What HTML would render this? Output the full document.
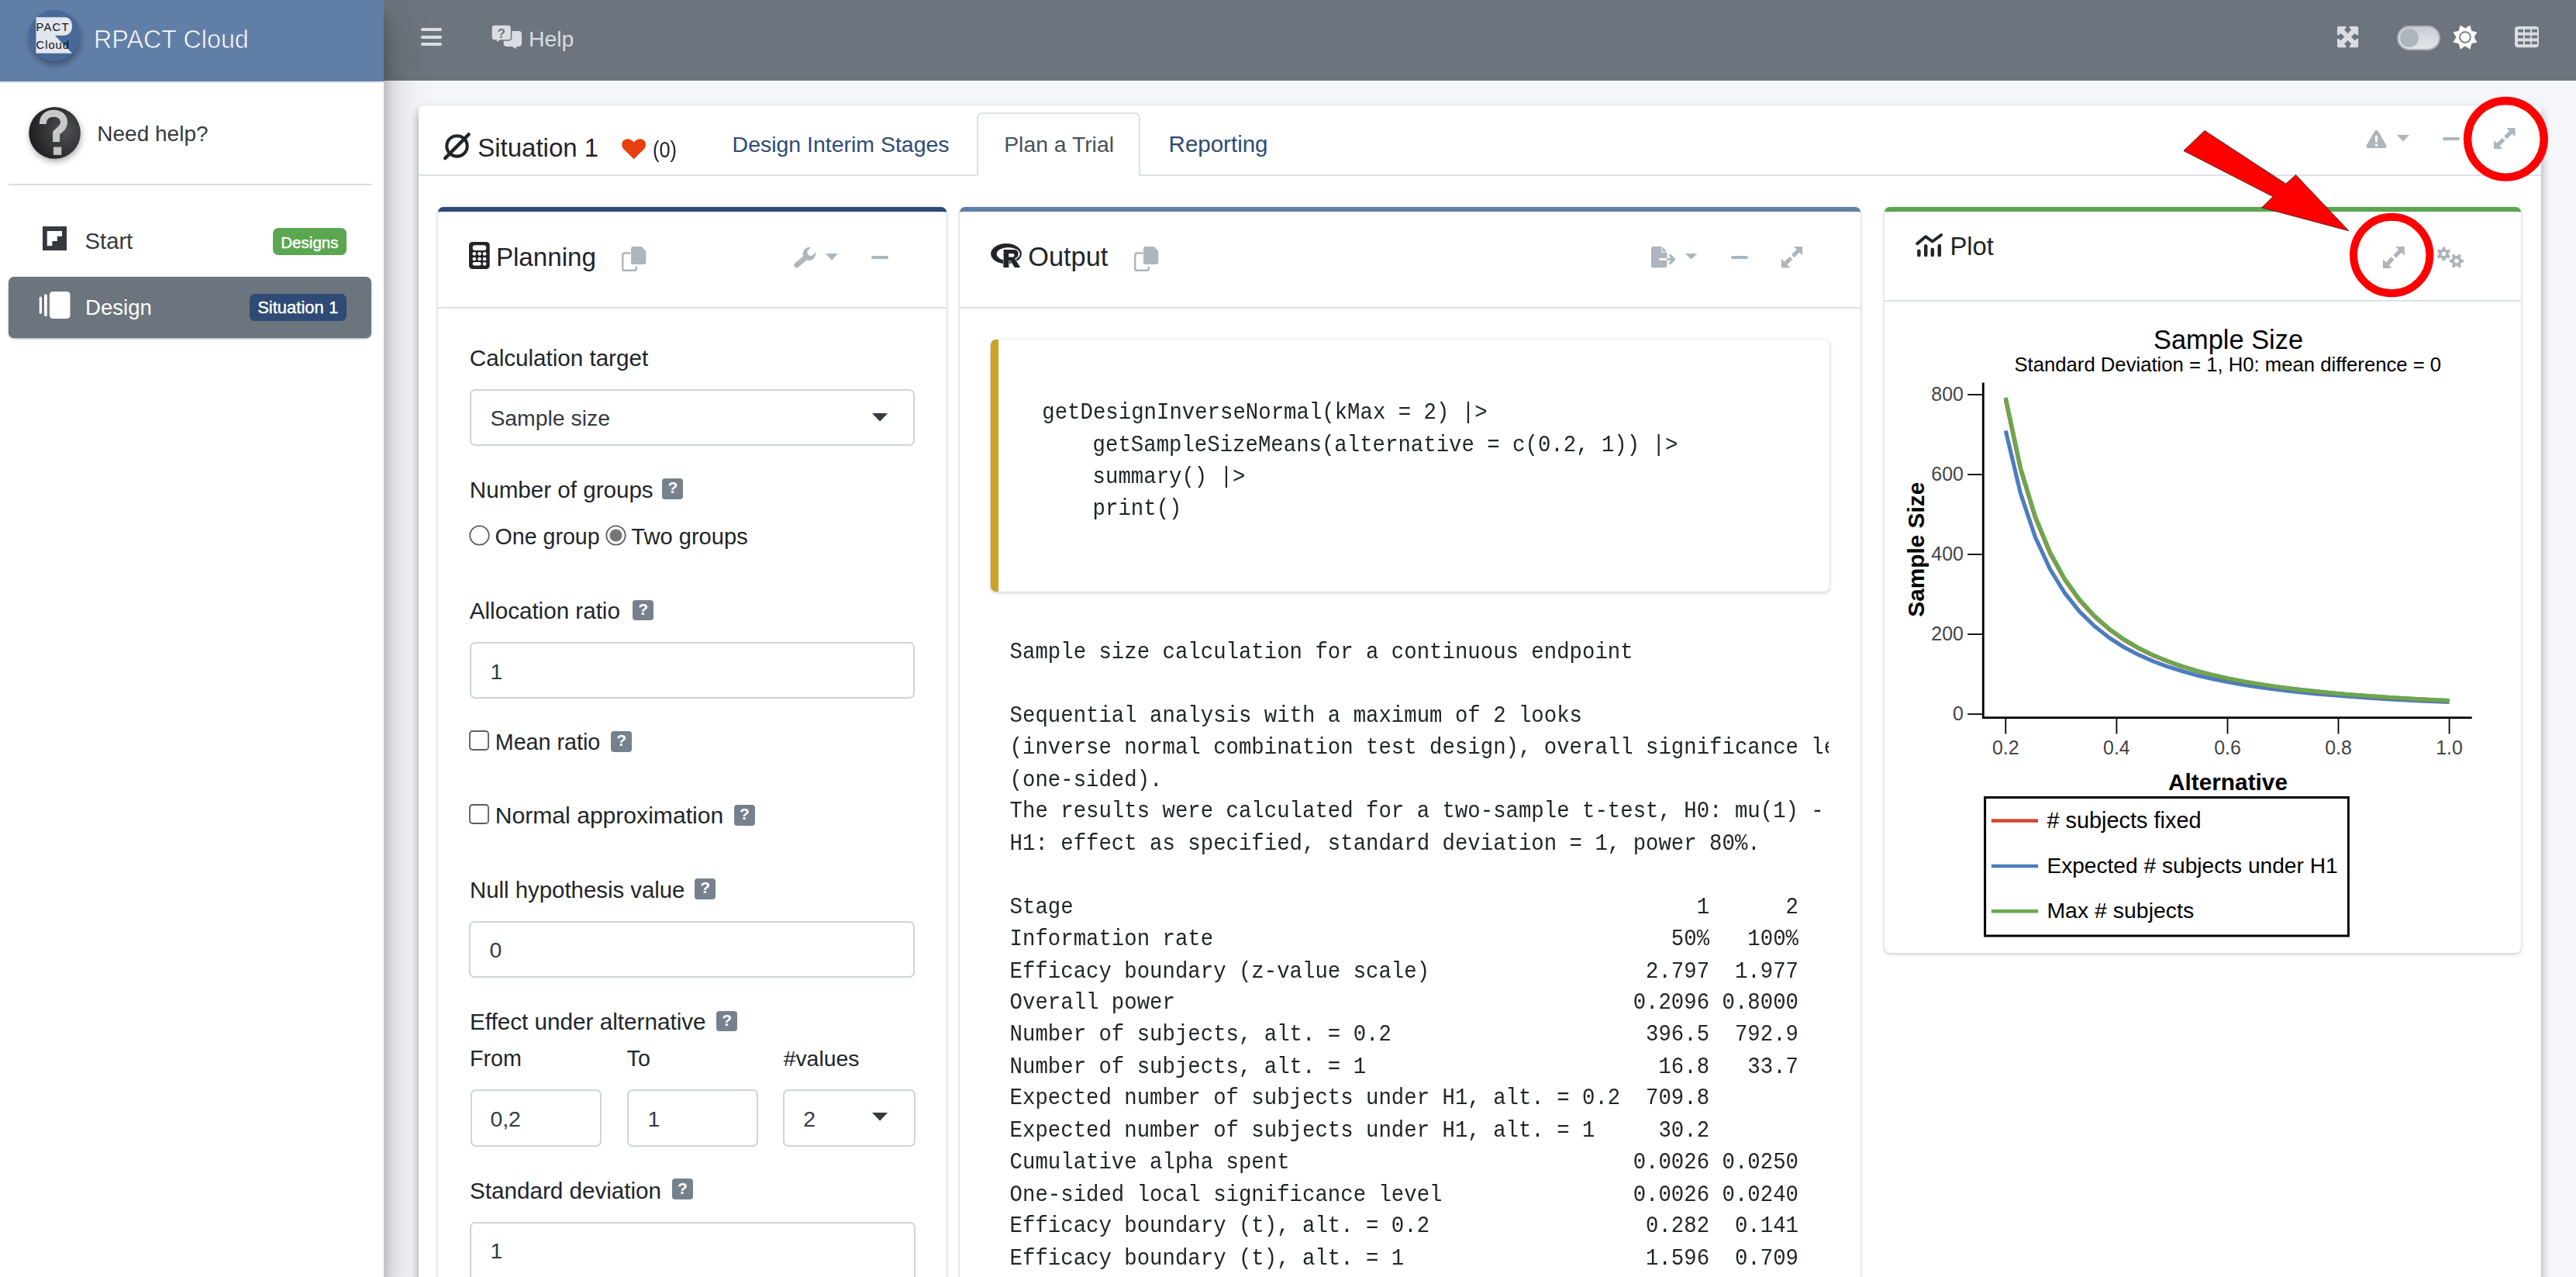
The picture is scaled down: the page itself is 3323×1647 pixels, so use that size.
<!DOCTYPE html>
<html><head><meta charset="utf-8"><title>RPACT Cloud</title>
<style>
html,body{margin:0;padding:0}
body{width:3323px;height:1647px;overflow:hidden;position:relative;background:#f4f6f9;font-family:"Liberation Sans",sans-serif;}
.t{position:absolute;white-space:pre;}
.b{position:absolute;box-sizing:border-box;}
svg.b{overflow:visible}
</style></head><body>

<div class="b" style="left:0.0px;top:0.0px;width:495.0px;height:1647.0px;background:#fff;box-shadow:0 28px 56px rgba(0,0,0,.25),0 20px 20px rgba(0,0,0,.22);z-index:2"></div>
<div class="b" style="left:0.0px;top:0.0px;width:495.0px;height:107.0px;background:#617ea7;border-bottom:2px solid #dfe3e8;z-index:3"></div>
<div style="position:absolute;left:0;top:0;width:495px;height:1647px;z-index:4">
<svg class="b" style="left:30.0px;top:6.0px;" width="80.00" height="80.00" viewBox="0 0 80.00 80.00" preserveAspectRatio="none">
<defs><filter id="lsh" x="-50%" y="-50%" width="200%" height="200%"><feGaussianBlur stdDeviation="4"/></filter></defs>
<circle cx="41" cy="45" r="33" fill="rgba(0,0,0,.35)" filter="url(#lsh)"/>
<circle cx="40" cy="40" r="33" fill="#476899"/>
<path d="M16.5 16.3 H53.5 C60 16.3 63 22 63 28 C63 35 59 39.7 52 39.7 H40.8 L63 62.8 H16.5 Z" fill="#e3e6ee"/>
<text x="16.5" y="33.9" font-family="Liberation Sans" font-size="14.8" fill="#111" textLength="42" lengthAdjust="spacing">PACT</text>
<text x="16.5" y="57.1" font-family="Liberation Sans" font-size="14.8" fill="#111" textLength="42.5" lengthAdjust="spacing">Cloud</text>
</svg>
<div class="t " style="left:121.0px;top:35.3px;font-size:32.3px;line-height:32.3px;color:#ffffff;font-weight:400;font-family:'Liberation Sans', sans-serif;z-index:5;-webkit-text-stroke:0.7px #617ea7">RPACT Cloud</div>
<svg class="b" style="left:30.0px;top:130.0px;" width="82.00" height="84.00" viewBox="0 0 82.00 84.00" preserveAspectRatio="none">
<defs><radialGradient id="hg" cx="70%" cy="45%" r="70%"><stop offset="0" stop-color="#505154"/><stop offset="1" stop-color="#1f1f21"/></radialGradient>
<filter id="hsh" x="-50%" y="-50%" width="200%" height="200%"><feGaussianBlur stdDeviation="4"/></filter></defs>
<circle cx="41.5" cy="45" r="33" fill="rgba(0,0,0,.35)" filter="url(#hsh)"/>
<circle cx="40.6" cy="41.4" r="33.3" fill="url(#hg)"/>
<path d="M25.3 30 C25.3 20 32 16.3 39.5 16.3 C47.5 16.3 52.6 21.5 52.6 27.8 C52.6 34.5 46.5 37.5 42.6 41.5 L42.6 53" fill="none" stroke="#c9c9c9" stroke-width="9" stroke-linejoin="round"/>
<rect x="38.9" y="59.6" width="10.4" height="10.2" fill="#c4c4c4"/>
</svg>
<div class="t " style="left:125.3px;top:158.8px;font-size:28px;line-height:28px;color:#343a40;font-weight:400;font-family:'Liberation Sans', sans-serif;">Need help?</div>
<div class="b" style="left:11.0px;top:237.0px;width:468.0px;height:2.0px;background:#d7dce2"></div>
<svg class="b" style="left:55.0px;top:292.0px;" width="31.00" height="31.00" viewBox="0 0 31.00 31.00" preserveAspectRatio="none"><rect x="0" y="0" width="31" height="31" fill="#343a40"/><path d="M5.8 6.1 H25 V12.7 H18.8 V19 H12.4 V25 H5.8 Z" fill="#fff"/></svg>
<div class="t " style="left:109.6px;top:296.7px;font-size:29.2px;line-height:29.2px;color:#343a40;font-weight:400;font-family:'Liberation Sans', sans-serif;">Start</div>
<div class="b" style="left:352.0px;top:294.0px;width:95.0px;height:34.6px;background:#5ba650;border-radius:7px"></div>
<div class="t " style="left:362.2px;top:302.5px;font-size:20.6px;line-height:20.6px;color:#fff;font-weight:400;font-family:'Liberation Sans', sans-serif;-webkit-text-stroke:0.4px #fff">Designs</div>
<div class="b" style="left:11.0px;top:357.0px;width:468.0px;height:78.5px;background:#6c757d;border-radius:7px;box-shadow:0 1px 3px rgba(0,0,0,.12),0 1px 2px rgba(0,0,0,.24)"></div>
<svg class="b" style="left:50.0px;top:375.0px;" width="41.00" height="37.00" viewBox="0 0 41.00 37.00" preserveAspectRatio="none"><rect x="0.7" y="7.6" width="3.3" height="22.2" rx="1.6" fill="#fff"/><rect x="7" y="4.3" width="3.8" height="28.8" rx="1.9" fill="#fff"/><rect x="13.9" y="1" width="26.6" height="35.1" rx="4.5" fill="#fff"/></svg>
<div class="t " style="left:110.0px;top:383.1px;font-size:27.6px;line-height:27.6px;color:#fff;font-weight:400;font-family:'Liberation Sans', sans-serif;">Design</div>
<div class="b" style="left:322.0px;top:378.7px;width:125.0px;height:35.1px;background:#2e4a75;border-radius:7px"></div>
<div class="t " style="left:332.2px;top:386.4px;font-size:22.0px;line-height:22.0px;color:#fff;font-weight:400;font-family:'Liberation Sans', sans-serif;-webkit-text-stroke:0.4px #fff">Situation 1</div>
</div>
<div class="b" style="left:495.0px;top:0.0px;width:2828.0px;height:104.0px;background:#6c757d;z-index:1"></div>
<div style="position:absolute;left:0;top:0;width:3323px;height:104px;z-index:5">
<div class="b" style="left:543.0px;top:35.8px;width:27.2px;height:4.1px;background:#dadde1;border-radius:2px"></div>
<div class="b" style="left:543.0px;top:45.7px;width:27.2px;height:4.1px;background:#dadde1;border-radius:2px"></div>
<div class="b" style="left:543.0px;top:55.3px;width:27.2px;height:4.1px;background:#dadde1;border-radius:2px"></div>
<svg class="b" style="left:630.0px;top:30.0px;" width="46.00" height="36.00" viewBox="0 0 46.00 36.00" preserveAspectRatio="none">
<path d="M23.7 9.9 H39 Q43 9.9 43 13.9 V26 Q43 30 39 30 H36 V33.1 L30.2 30 H23.7 Q19.7 30 19.7 26 V13.9 Q19.7 9.9 23.7 9.9 Z" fill="#dadde1"/>
<path d="M8 2 H25.6 Q29.6 2 29.6 6 V18.1 Q29.6 22.1 25.6 22.1 H15.7 L10.1 25.3 V22.1 H8 Q4 22.1 4 18.1 V6 Q4 2 8 2 Z" fill="#dadde1" stroke="#6c757d" stroke-width="1.5"/>
<text x="16.6" y="18.6" font-family="Liberation Sans" font-weight="bold" font-size="17" fill="#6c757d" text-anchor="middle">?</text>
</svg>
<div class="t " style="left:682.0px;top:35.5px;font-size:28.4px;line-height:28.4px;color:#dadde1;font-weight:400;font-family:'Liberation Sans', sans-serif;">Help</div>
<svg class="b" style="left:3015.0px;top:34.0px;" width="27.20" height="27.20" viewBox="0 0 27.20 27.20" preserveAspectRatio="none"><rect x="0" y="0" width="27.2" height="27.2" rx="1.8" fill="#dadde1"/><polygon points="11.30,-1.00 11.30,2.00 9.00,4.50 13.60,9.30 18.20,4.50 15.90,2.00 15.90,-1.00" fill="#6c757d"/><polygon points="28.20,11.30 25.20,11.30 22.70,9.00 17.90,13.60 22.70,18.20 25.20,15.90 28.20,15.90" fill="#6c757d"/><polygon points="15.90,28.20 15.90,25.20 18.20,22.70 13.60,17.90 9.00,22.70 11.30,25.20 11.30,28.20" fill="#6c757d"/><polygon points="-1.00,15.90 2.00,15.90 4.50,18.20 9.30,13.60 4.50,9.00 2.00,11.30 -1.00,11.30" fill="#6c757d"/></svg>
<svg class="b" style="left:3092.0px;top:32.8px;" width="56.00" height="31.90" viewBox="0 0 56.00 31.90" preserveAspectRatio="none">
<defs><linearGradient id="tg" x1="0" y1="0" x2="0" y2="1"><stop offset="0" stop-color="#c9cdd3"/><stop offset="1" stop-color="#e4e6ea"/></linearGradient></defs>
<rect x="1" y="1" width="54" height="29.9" rx="15" fill="url(#tg)" stroke="#a9b0b9" stroke-width="2"/>
<circle cx="16" cy="16" r="12" fill="#adb5bd"/></svg>
<svg class="b" style="left:3163.5px;top:31.6px;" width="32.00" height="32.00" viewBox="0 0 32.00 32.00" preserveAspectRatio="none"><polygon points="22.39,0.57 24.20,7.80 31.43,9.61 27.60,16.00 31.43,22.39 24.20,24.20 22.39,31.43 16.00,27.60 9.61,31.43 7.80,24.20 0.57,22.39 4.40,16.00 0.57,9.61 7.80,7.80 9.61,0.57 16.00,4.40" fill="#fff"/><circle cx="16" cy="16" r="6.9" fill="#fff" stroke="#6c757d" stroke-width="1.7"/></svg>
<svg class="b" style="left:3244.0px;top:34.2px;" width="31.00" height="27.20" viewBox="0 0 31.00 27.20" preserveAspectRatio="none"><rect x="0" y="0" width="31" height="27.2" rx="4" fill="#dadde1"/><rect x="4" y="3.8" width="7" height="3.9" fill="#6c757d"/><rect x="4" y="11.5" width="7" height="3.9" fill="#6c757d"/><rect x="4" y="19.3" width="7" height="3.9" fill="#6c757d"/><rect x="13" y="3.8" width="7" height="3.9" fill="#6c757d"/><rect x="13" y="11.5" width="7" height="3.9" fill="#6c757d"/><rect x="13" y="19.3" width="7" height="3.9" fill="#6c757d"/><rect x="22" y="3.8" width="7" height="3.9" fill="#6c757d"/><rect x="22" y="11.5" width="7" height="3.9" fill="#6c757d"/><rect x="22" y="19.3" width="7" height="3.9" fill="#6c757d"/></svg>
</div>
<div style="position:absolute;left:0;top:0;width:3323px;height:1647px;z-index:6">
<div class="b" style="left:540.0px;top:136.0px;width:2738.0px;height:1564.0px;background:#fff;border-radius:7px;box-shadow:0 6px 12px rgba(0,0,0,.16),0 6px 12px rgba(0,0,0,.23)"></div>
<div class="b" style="left:540.0px;top:225.0px;width:2738.0px;height:2.0px;background:#dee2e6"></div>
<svg class="b" style="left:572.0px;top:170.8px;" width="35.00" height="35.00" viewBox="0 0 35.00 35.00" preserveAspectRatio="none"><circle cx="17.5" cy="17.4" r="13.2" fill="none" stroke="#212529" stroke-width="4.1"/><line x1="2.3" y1="33" x2="32.5" y2="2.5" stroke="#212529" stroke-width="4.6" stroke-linecap="round"/></svg>
<div class="t " style="left:616.2px;top:174.1px;font-size:33px;line-height:33px;color:#212529;font-weight:400;font-family:'Liberation Sans', sans-serif;">Situation 1</div>
<svg class="b" style="left:802.0px;top:179.4px;" width="31.30" height="26.30" viewBox="0 0 31.30 26.30" preserveAspectRatio="none"><path d="M15.65 26.3 L3 13.8 C-1 9.8 -0.5 3.5 3.8 1.2 C7.8 -1 12 0.5 15.65 4.3 C19.3 0.5 23.5 -1 27.5 1.2 C31.8 3.5 32.3 9.8 28.3 13.8 Z" fill="#e5400d"/></svg>
<div class="t " style="left:842.0px;top:182.3px;font-size:25.4px;line-height:25.4px;color:#212529;font-weight:400;font-family:'Liberation Sans', sans-serif;transform:scaleY(1.14);transform-origin:0 21.5px">(0)</div>
<div class="t " style="left:944.6px;top:172.3px;font-size:28.46px;line-height:28.46px;color:#2e4a75;font-weight:400;font-family:'Liberation Sans', sans-serif;">Design Interim Stages</div>
<div class="b" style="left:1260.0px;top:144.5px;width:211.0px;height:82.5px;background:#fff;border:2px solid #dee2e6;border-bottom:none;border-radius:7px 7px 0 0"></div>
<div class="t " style="left:1295.2px;top:171.7px;font-size:28.35px;line-height:28.35px;color:#495057;font-weight:400;font-family:'Liberation Sans', sans-serif;">Plan a Trial</div>
<div class="t " style="left:1507.6px;top:171.4px;font-size:29.5px;line-height:29.5px;color:#2e4a75;font-weight:400;font-family:'Liberation Sans', sans-serif;">Reporting</div>
<svg class="b" style="left:3052.0px;top:167.0px;" width="27.00" height="24.00" viewBox="0 0 27.00 24.00" preserveAspectRatio="none"><path d="M13.5 1 C14.6 1 15.4 1.6 16 2.6 L26.3 20.6 C27.3 22.3 26.2 24 24.3 24 H2.7 C0.8 24 -0.3 22.3 0.7 20.6 L11 2.6 C11.6 1.6 12.4 1 13.5 1 Z" fill="#adb5bd"/><rect x="12" y="7.5" width="3" height="9" rx="1.4" fill="#fff"/><circle cx="13.5" cy="20" r="1.8" fill="#fff"/></svg>
<svg class="b" style="left:3092.0px;top:173.5px;" width="16.00" height="8.50" viewBox="0 0 16.00 8.50" preserveAspectRatio="none"><path d="M0 0 H16 L8 8.5 Z" fill="#adb5bd"/></svg>
<div class="b" style="left:3151.0px;top:176.8px;width:22.0px;height:4.2px;background:#adb5bd;border-radius:2px"></div>
<svg class="b" style="left:3217.0px;top:165.0px;" width="27.60" height="27.00" viewBox="0 0 27.5 27.5" preserveAspectRatio="none"><g fill="#adb5bd">
<path d="M27.5 0 V11.5 L23.6 7.6 L16.8 14.4 L13.1 10.7 L19.9 3.9 L16 0 Z"/>
<path d="M0 27.5 V16 L3.9 19.9 L10.7 13.1 L14.4 16.8 L7.6 23.6 L11.5 27.5 Z"/></g></svg>
<div class="b" style="left:565.0px;top:267.0px;width:656.0px;height:1433.0px;background:#fff;border-radius:7px;box-shadow:0 0 2px rgba(0,0,0,.15),0 2px 5px rgba(0,0,0,.18);border-top:6px solid #2e4a75"></div>
<div class="b" style="left:565.0px;top:396.0px;width:656.0px;height:2.0px;background:#dee2e6"></div>
<svg class="b" style="left:604.7px;top:312.0px;" width="26.70" height="35.00" viewBox="0 0 26.70 35.00" preserveAspectRatio="none"><rect x="0" y="0" width="26.7" height="35" rx="4.5" fill="#212529"/><rect x="4.7" y="4.2" width="17.6" height="6.9" rx="3.3" fill="#fff"/><circle cx="6.8" cy="15.3" r="2.35" fill="#fff"/><circle cx="6.8" cy="22" r="2.35" fill="#fff"/><circle cx="13.5" cy="15.3" r="2.35" fill="#fff"/><circle cx="13.5" cy="22" r="2.35" fill="#fff"/><circle cx="20.1" cy="15.3" r="2.35" fill="#fff"/><circle cx="20.1" cy="22" r="2.35" fill="#fff"/><rect x="4.6" y="25.9" width="11.1" height="4.7" rx="2.35" fill="#fff"/><circle cx="20.1" cy="28.3" r="2.35" fill="#fff"/></svg>
<div class="t " style="left:639.9px;top:314.9px;font-size:33.15px;line-height:33.15px;color:#212529;font-weight:400;font-family:'Liberation Sans', sans-serif;">Planning</div>
<svg class="b" style="left:801.8px;top:318.0px;" width="31.70" height="31.20" viewBox="0 0 31.70 31.20" preserveAspectRatio="none"><path d="M11.5 8.6 H3.6 Q1.2 8.6 1.2 11 V28.4 Q1.2 30.8 3.6 30.8 H16.4 Q18.8 30.8 18.8 28.4 V25.8" fill="none" stroke="#adb5bd" stroke-width="2.5"/><path d="M14.9 0 H25.5 L31.3 5.8 V20.1 Q31.3 23 28.4 23 H14.9 Q12 23 12 20.1 V2.9 Q12 0 14.9 0 Z" fill="#adb5bd"/></svg>
<svg class="b" style="left:1024.7px;top:318.0px;" width="28.00" height="27.20" viewBox="0 0 28.00 27.20" preserveAspectRatio="none"><path d="M27 7.5 C27.8 11.8 25.5 16.2 21.2 17.6 C19.3 18.2 17.4 18.1 15.7 17.5 L4.8 26.5 C3.3 27.8 1.1 27.6 -0.1 26.1 C-1.3 24.6 -1 22.4 0.6 21.2 L11.2 12.3 C10.5 10.6 10.4 8.7 11 6.8 C12.4 2.5 16.8 0.2 21.1 1 L16.2 6 L17.3 10.9 L22.2 12 Z" fill="#adb5bd"/></svg>
<svg class="b" style="left:1064.7px;top:326.6px;" width="15.90" height="8.80" viewBox="0 0 15.90 8.80" preserveAspectRatio="none"><path d="M0 0 H15.9 L7.95 8.8 Z" fill="#adb5bd"/></svg>
<div class="b" style="left:1124.0px;top:330.0px;width:22.0px;height:4.0px;background:#adb5bd;border-radius:2px"></div>
<div class="t " style="left:605.8px;top:447.4px;font-size:29.6px;line-height:29.6px;color:#212529;font-weight:400;font-family:'Liberation Sans', sans-serif;">Calculation target</div>
<div class="b" style="left:605.8px;top:501.8px;width:574.7px;height:73.2px;background:#fff;border:2px solid #ced4da;border-radius:7px"></div>
<div class="t " style="left:632.4px;top:525.0px;font-size:28.4px;line-height:28.4px;color:#343a40;font-weight:400;font-family:'Liberation Sans', sans-serif;">Sample size</div>
<svg class="b" style="left:1124.6px;top:533.0px;" width="20.20" height="10.50" viewBox="0 0 20.20 10.50" preserveAspectRatio="none"><path d="M0 0 H20.2 L10.1 10.5 Z" fill="#343a40"/></svg>
<div class="t " style="left:605.8px;top:616.9px;font-size:29.6px;line-height:29.6px;color:#212529;font-weight:400;font-family:'Liberation Sans', sans-serif;">Number of groups</div>
<div class="b" style="left:854.3px;top:617.3px;width:27.1px;height:26.7px;background:#76818d;border-radius:4px"></div>
<div class="t" style="left:854.3px;top:616.3px;width:27.1px;text-align:center;font-size:21px;line-height:26.7px;font-weight:700;color:#fff">?</div>
<svg class="b" style="left:604.5px;top:676.5px;" width="27.00" height="27.00" viewBox="0 0 27.00 27.00" preserveAspectRatio="none"><circle cx="13.5" cy="13.5" r="12.2" fill="#fff" stroke="#5c5c5c" stroke-width="1.8"/></svg>
<div class="t " style="left:638.6px;top:678.3px;font-size:28.57px;line-height:28.57px;color:#212529;font-weight:400;font-family:'Liberation Sans', sans-serif;">One group</div>
<svg class="b" style="left:780.5px;top:676.5px;" width="27.00" height="27.00" viewBox="0 0 27.00 27.00" preserveAspectRatio="none"><circle cx="13.5" cy="13.5" r="12.2" fill="#fff" stroke="#5c5c5c" stroke-width="1.8"/><circle cx="13.5" cy="13.5" r="8" fill="#767676"/></svg>
<div class="t " style="left:814.3px;top:677.9px;font-size:29.1px;line-height:29.1px;color:#212529;font-weight:400;font-family:'Liberation Sans', sans-serif;">Two groups</div>
<div class="t " style="left:605.8px;top:773.3px;font-size:29.6px;line-height:29.6px;color:#212529;font-weight:400;font-family:'Liberation Sans', sans-serif;">Allocation ratio</div>
<div class="b" style="left:816.2px;top:773.6px;width:26.8px;height:26.1px;background:#76818d;border-radius:4px"></div>
<div class="t" style="left:816.2px;top:772.6px;width:26.8px;text-align:center;font-size:21px;line-height:26.1px;font-weight:700;color:#fff">?</div>
<div class="b" style="left:605.8px;top:827.7px;width:574.7px;height:73.3px;background:#fff;border:2px solid #ced4da;border-radius:7px"></div>
<div class="t " style="left:632.4px;top:852.2px;font-size:28.4px;line-height:28.4px;color:#343a40;font-weight:400;font-family:'Liberation Sans', sans-serif;">1</div>
<svg class="b" style="left:605.0px;top:942.0px;" width="26.00" height="26.00" viewBox="0 0 26.00 26.00" preserveAspectRatio="none"><rect x="1" y="1" width="24" height="24" rx="3.5" fill="#fff" stroke="#5c5c5c" stroke-width="1.8"/></svg>
<div class="t " style="left:638.8px;top:943.3px;font-size:28.66px;line-height:28.66px;color:#212529;font-weight:400;font-family:'Liberation Sans', sans-serif;">Mean ratio</div>
<div class="b" style="left:788.2px;top:943.2px;width:27.1px;height:26.8px;background:#76818d;border-radius:4px"></div>
<div class="t" style="left:788.2px;top:942.2px;width:27.1px;text-align:center;font-size:21px;line-height:26.8px;font-weight:700;color:#fff">?</div>
<svg class="b" style="left:605.0px;top:1037.3px;" width="26.00" height="26.00" viewBox="0 0 26.00 26.00" preserveAspectRatio="none"><rect x="1" y="1" width="24" height="24" rx="3.5" fill="#fff" stroke="#5c5c5c" stroke-width="1.8"/></svg>
<div class="t " style="left:638.8px;top:1037.3px;font-size:30.1px;line-height:30.1px;color:#212529;font-weight:400;font-family:'Liberation Sans', sans-serif;">Normal approximation</div>
<div class="b" style="left:946.8px;top:1038.3px;width:27.4px;height:26.7px;background:#76818d;border-radius:4px"></div>
<div class="t" style="left:946.8px;top:1037.3px;width:27.4px;text-align:center;font-size:21px;line-height:26.7px;font-weight:700;color:#fff">?</div>
<div class="t " style="left:606.1px;top:1133.1px;font-size:29.35px;line-height:29.35px;color:#212529;font-weight:400;font-family:'Liberation Sans', sans-serif;">Null hypothesis value</div>
<div class="b" style="left:896.2px;top:1133.3px;width:26.8px;height:26.7px;background:#76818d;border-radius:4px"></div>
<div class="t" style="left:896.2px;top:1132.3px;width:26.8px;text-align:center;font-size:21px;line-height:26.7px;font-weight:700;color:#fff">?</div>
<div class="b" style="left:605.3px;top:1187.8px;width:575.0px;height:72.9px;background:#fff;border:2px solid #ced4da;border-radius:7px"></div>
<div class="t " style="left:631.4px;top:1211.4px;font-size:28.4px;line-height:28.4px;color:#343a40;font-weight:400;font-family:'Liberation Sans', sans-serif;">0</div>
<div class="t " style="left:606.0px;top:1303.2px;font-size:29.68px;line-height:29.68px;color:#212529;font-weight:400;font-family:'Liberation Sans', sans-serif;">Effect under alternative</div>
<div class="b" style="left:924.2px;top:1303.6px;width:26.8px;height:26.7px;background:#76818d;border-radius:4px"></div>
<div class="t" style="left:924.2px;top:1302.6px;width:26.8px;text-align:center;font-size:21px;line-height:26.7px;font-weight:700;color:#fff">?</div>
<div class="t " style="left:606.0px;top:1350.7px;font-size:28.6px;line-height:28.6px;color:#212529;font-weight:400;font-family:'Liberation Sans', sans-serif;">From</div>
<div class="t " style="left:808.6px;top:1350.7px;font-size:28.6px;line-height:28.6px;color:#212529;font-weight:400;font-family:'Liberation Sans', sans-serif;">To</div>
<div class="t " style="left:1010.7px;top:1350.9px;font-size:28.35px;line-height:28.35px;color:#212529;font-weight:400;font-family:'Liberation Sans', sans-serif;">#values</div>
<div class="b" style="left:606.6px;top:1404.5px;width:169.0px;height:74.4px;background:#fff;border:2px solid #ced4da;border-radius:7px"></div>
<div class="t " style="left:632.4px;top:1428.5px;font-size:28.4px;line-height:28.4px;color:#343a40;font-weight:400;font-family:'Liberation Sans', sans-serif;">0,2</div>
<div class="b" style="left:808.6px;top:1404.5px;width:169.6px;height:74.4px;background:#fff;border:2px solid #ced4da;border-radius:7px"></div>
<div class="t " style="left:835.4px;top:1428.5px;font-size:28.4px;line-height:28.4px;color:#343a40;font-weight:400;font-family:'Liberation Sans', sans-serif;">1</div>
<div class="b" style="left:1010.4px;top:1404.5px;width:170.5px;height:74.4px;background:#fff;border:2px solid #ced4da;border-radius:7px"></div>
<div class="t " style="left:1036.3px;top:1428.5px;font-size:28.4px;line-height:28.4px;color:#343a40;font-weight:400;font-family:'Liberation Sans', sans-serif;">2</div>
<svg class="b" style="left:1124.8px;top:1435.2px;" width="20.20" height="10.50" viewBox="0 0 20.20 10.50" preserveAspectRatio="none"><path d="M0 0 H20.2 L10.1 10.5 Z" fill="#343a40"/></svg>
<div class="t " style="left:606.0px;top:1520.8px;font-size:29.64px;line-height:29.64px;color:#212529;font-weight:400;font-family:'Liberation Sans', sans-serif;">Standard deviation</div>
<div class="b" style="left:867.0px;top:1520.0px;width:27.0px;height:27.3px;background:#76818d;border-radius:4px"></div>
<div class="t" style="left:867.0px;top:1519.0px;width:27.0px;text-align:center;font-size:21px;line-height:27.3px;font-weight:700;color:#fff">?</div>
<div class="b" style="left:606.0px;top:1575.5px;width:574.5px;height:124.5px;background:#fff;border:2px solid #ced4da;border-radius:7px"></div>
<div class="t " style="left:632.4px;top:1599.0px;font-size:28.4px;line-height:28.4px;color:#343a40;font-weight:400;font-family:'Liberation Sans', sans-serif;">1</div>
<div class="b" style="left:1238.0px;top:267.0px;width:1162.0px;height:1433.0px;background:#fff;border-radius:7px;box-shadow:0 0 2px rgba(0,0,0,.15),0 2px 5px rgba(0,0,0,.18);border-top:6px solid #617ea7"></div>
<div class="b" style="left:1238.0px;top:395.5px;width:1162.0px;height:2.0px;background:#dee2e6"></div>
<svg class="b" style="left:1278.0px;top:314.0px;" width="40.50" height="31.50" viewBox="0 0 40.50 31.50" preserveAspectRatio="none"><path fill-rule="evenodd" fill="#212529" d="M0.1 13.2 A19.9 13.1 0 1 0 39.9 13.2 A19.9 13.1 0 1 0 0.1 13.2 Z M7.7 13.6 A15 8.6 0 1 0 37.7 13.6 A15 8.6 0 1 0 7.7 13.6 Z"/>
<path fill-rule="evenodd" d="M16.6 8.1 H30 C34 8.1 35.6 10.5 35.6 13.5 C35.6 16.3 34 18.5 31 19.2 L38.2 30.9 H30.9 L25.4 22.2 H23.2 V30.9 H16.6 Z M23.2 13 V17.5 H28.5 C29.8 17.5 30.5 16.5 30.5 15.2 C30.5 13.9 29.8 13 28.5 13 Z" fill="#212529" stroke="#fff" stroke-width="1.3" paint-order="stroke"/>
<path d="M16.6 22 V30.9 H23.2 V22 Z" fill="#212529"/></svg>
<div class="t " style="left:1326.3px;top:313.7px;font-size:34.3px;line-height:34.3px;color:#212529;font-weight:400;font-family:'Liberation Sans', sans-serif;">Output</div>
<svg class="b" style="left:1463.0px;top:318.0px;" width="31.70" height="31.20" viewBox="0 0 31.70 31.20" preserveAspectRatio="none"><path d="M11.5 8.6 H3.6 Q1.2 8.6 1.2 11 V28.4 Q1.2 30.8 3.6 30.8 H16.4 Q18.8 30.8 18.8 28.4 V25.8" fill="none" stroke="#adb5bd" stroke-width="2.5"/><path d="M14.9 0 H25.5 L31.3 5.8 V20.1 Q31.3 23 28.4 23 H14.9 Q12 23 12 20.1 V2.9 Q12 0 14.9 0 Z" fill="#adb5bd"/></svg>
<svg class="b" style="left:2130.0px;top:318.0px;" width="31.00" height="27.20" viewBox="0 0 31.00 27.20" preserveAspectRatio="none"><path d="M2.5 0 H13.5 V7.5 H20.5 V24.7 Q20.5 27.2 18 27.2 H2.5 Q0 27.2 0 24.7 V2.5 Q0 0 2.5 0 Z" fill="#adb5bd"/><path d="M14.6 0.6 L20.4 6.4 H14.6 Z" fill="#adb5bd"/><rect x="10" y="15" width="10.5" height="2.8" rx="1.2" fill="#fff"/><rect x="20.5" y="15" width="8" height="2.8" fill="#adb5bd"/><path d="M24.4 11.4 L29.4 16.4 L24.4 21.4" fill="none" stroke="#adb5bd" stroke-width="3.2" stroke-linecap="round" stroke-linejoin="round"/></svg>
<svg class="b" style="left:2174.3px;top:327.0px;" width="15.40" height="7.60" viewBox="0 0 15.40 7.60" preserveAspectRatio="none"><path d="M0 0 H15.4 L7.7 7.6 Z" fill="#adb5bd"/></svg>
<div class="b" style="left:2233.0px;top:330.0px;width:21.7px;height:3.5px;background:#adb5bd;border-radius:2px"></div>
<svg class="b" style="left:2298.0px;top:318.0px;" width="27.20" height="27.20" viewBox="0 0 27.5 27.5" preserveAspectRatio="none"><g fill="#adb5bd">
<path d="M27.5 0 V11.5 L23.6 7.6 L16.8 14.4 L13.1 10.7 L19.9 3.9 L16 0 Z"/>
<path d="M0 27.5 V16 L3.9 19.9 L10.7 13.1 L14.4 16.8 L7.6 23.6 L11.5 27.5 Z"/></g></svg>
<div class="b" style="left:1278.0px;top:438.0px;width:1082.0px;height:324.6px;background:#fff;border-left:10px solid #c9a227;border-radius:7px;box-shadow:0 0 2px rgba(0,0,0,.14),0 2px 5px rgba(0,0,0,.16)"></div>
<div class="t " style="left:1344.3px;top:519.3px;font-size:27.35px;line-height:27.35px;color:#212529;font-weight:400;font-family:'Liberation Mono', monospace;transform:scaleY(1.07);transform-origin:0 20.95px">getDesignInverseNormal(kMax = 2) |&gt;</div>
<div class="t " style="left:1409.6px;top:560.5px;font-size:27.35px;line-height:27.35px;color:#212529;font-weight:400;font-family:'Liberation Mono', monospace;transform:scaleY(1.07);transform-origin:0 20.95px">getSampleSizeMeans(alternative = c(0.2, 1)) |&gt;</div>
<div class="t " style="left:1409.6px;top:601.7px;font-size:27.35px;line-height:27.35px;color:#212529;font-weight:400;font-family:'Liberation Mono', monospace;transform:scaleY(1.07);transform-origin:0 20.95px">summary() |&gt;</div>
<div class="t " style="left:1409.6px;top:642.9px;font-size:27.35px;line-height:27.35px;color:#212529;font-weight:400;font-family:'Liberation Mono', monospace;transform:scaleY(1.07);transform-origin:0 20.95px">print()</div>
<div style="position:absolute;left:1302.6px;top:820px;width:1056px;height:900px;overflow:hidden">
<pre style="margin:0;position:absolute;left:0;top:0.54px;font-family:'Liberation Mono', monospace;font-size:27.35px;line-height:38.458px;color:#212529;transform:scaleY(1.07);transform-origin:0 0">Sample size calculation for a continuous endpoint

Sequential analysis with a maximum of 2 looks
(inverse normal combination test design), overall significance level 2.5%
(one-sided).
The results were calculated for a two-sample t-test, H0: mu(1) - mu(2) = 0,
H1: effect as specified, standard deviation = 1, power 80%.

Stage                                                 1      2
Information rate                                    50%   100%
Efficacy boundary (z-value scale)                 2.797  1.977
Overall power                                    0.2096 0.8000
Number of subjects, alt. = 0.2                    396.5  792.9
Number of subjects, alt. = 1                       16.8   33.7
Expected number of subjects under H1, alt. = 0.2  709.8
Expected number of subjects under H1, alt. = 1     30.2
Cumulative alpha spent                           0.0026 0.0250
One-sided local significance level               0.0026 0.0240
Efficacy boundary (t), alt. = 0.2                 0.282  0.141
Efficacy boundary (t), alt. = 1                   1.596  0.709</pre>
</div>
<div class="b" style="left:2431.0px;top:267.0px;width:821.0px;height:961.5px;background:#fff;border-radius:7px;box-shadow:0 0 2px rgba(0,0,0,.15),0 2px 5px rgba(0,0,0,.18);border-top:6px solid #5ba650"></div>
<div class="b" style="left:2431.0px;top:386.5px;width:821.0px;height:2.0px;background:#dee2e6"></div>
<svg class="b" style="left:2471.0px;top:301.2px;" width="35.00" height="30.50" viewBox="0 0 35.00 30.50" preserveAspectRatio="none"><path d="M2.2 13.3 L13 4.2 L21.8 10.5 L33.2 2" fill="none" stroke="#212529" stroke-width="3.9" stroke-linecap="round" stroke-linejoin="round"/><rect x="2.15" y="20.6" width="4.5" height="9.7" rx="2.25" fill="#212529"/><rect x="10.95" y="14" width="4.5" height="16.3" rx="2.25" fill="#212529"/><rect x="19.55" y="18.6" width="4.5" height="11.7" rx="2.25" fill="#212529"/><rect x="28.55" y="13.8" width="4.5" height="16.5" rx="2.25" fill="#212529"/></svg>
<div class="t " style="left:2515.4px;top:302.1px;font-size:32.85px;line-height:32.85px;color:#212529;font-weight:400;font-family:'Liberation Sans', sans-serif;">Plot</div>
<svg class="b" style="left:3073.8px;top:317.6px;" width="27.80" height="28.00" viewBox="0 0 27.5 27.5" preserveAspectRatio="none"><g fill="#adb5bd">
<path d="M27.5 0 V11.5 L23.6 7.6 L16.8 14.4 L13.1 10.7 L19.9 3.9 L16 0 Z"/>
<path d="M0 27.5 V16 L3.9 19.9 L10.7 13.1 L14.4 16.8 L7.6 23.6 L11.5 27.5 Z"/></g></svg>
<svg class="b" style="left:3135.0px;top:310.0px;" width="50.00" height="42.00" viewBox="0 0 50.00 42.00" preserveAspectRatio="none"><circle cx="17.40" cy="17.40" r="6.36" fill="#adb5bd"/><line x1="17.40" y1="10.40" x2="17.40" y2="24.40" stroke="#adb5bd" stroke-width="4.4" stroke-linecap="round"/><line x1="23.46" y1="13.90" x2="11.34" y2="20.90" stroke="#adb5bd" stroke-width="4.4" stroke-linecap="round"/><line x1="23.46" y1="20.90" x2="11.34" y2="13.90" stroke="#adb5bd" stroke-width="4.4" stroke-linecap="round"/><circle cx="17.40" cy="17.40" r="2.67" fill="#fff"/><circle cx="33.90" cy="26.60" r="6.59" fill="#adb5bd"/><line x1="26.60" y1="26.60" x2="41.20" y2="26.60" stroke="#adb5bd" stroke-width="4.4" stroke-linecap="round"/><line x1="30.25" y1="20.28" x2="37.55" y2="32.92" stroke="#adb5bd" stroke-width="4.4" stroke-linecap="round"/><line x1="37.55" y1="20.28" x2="30.25" y2="32.92" stroke="#adb5bd" stroke-width="4.4" stroke-linecap="round"/><circle cx="33.90" cy="26.60" r="2.76" fill="#fff"/></svg>
<svg class="b" style="left:0;top:0" width="3323" height="1647" viewBox="0 0 3323 1647"><polyline points="2587.3,555.5 2606.4,636.2 2625.5,692.8 2644.5,734.0 2663.6,765.0 2682.7,788.8 2701.8,807.5 2720.8,822.5 2739.9,834.7 2759.0,844.7 2778.1,853.1 2797.2,860.1 2816.2,866.1 2835.3,871.2 2854.4,875.7 2873.5,879.5 2892.5,882.9 2911.6,885.9 2930.7,888.5 2949.8,890.8 2968.8,892.9 2987.9,894.8 3007.0,896.5 3026.1,898.0 3045.2,899.4 3064.2,900.6 3083.3,901.8 3102.4,902.8 3121.5,903.8 3140.5,904.6 3159.6,905.4" fill="none" stroke="#4c7dbf" stroke-width="5.2" stroke-linejoin="round"/><polyline points="2587.3,515.1 2606.4,604.7 2625.5,667.6 2644.5,713.4 2663.6,747.7 2682.7,774.2 2701.8,795.0 2720.8,811.6 2739.9,825.2 2759.0,836.3 2778.1,845.6 2797.2,853.4 2816.2,860.1 2835.3,865.8 2854.4,870.7 2873.5,875.0 2892.5,878.7 2911.6,882.0 2930.7,884.9 2949.8,887.5 2968.8,889.9 2987.9,891.9 3007.0,893.8 3026.1,895.5 3045.2,897.0 3064.2,898.4 3083.3,899.7 3102.4,900.8 3121.5,901.9 3140.5,902.9 3159.6,903.8" fill="none" stroke="#d1452d" stroke-width="5.2" stroke-linejoin="round"/><polyline points="2587.3,512.7 2606.4,602.9 2625.5,666.1 2644.5,712.1 2663.6,746.7 2682.7,773.3 2701.8,794.2 2720.8,811.0 2739.9,824.6 2759.0,835.8 2778.1,845.1 2797.2,853.0 2816.2,859.7 2835.3,865.4 2854.4,870.4 2873.5,874.7 2892.5,878.5 2911.6,881.8 2930.7,884.7 2949.8,887.3 2968.8,889.6 2987.9,891.7 3007.0,893.6 3026.1,895.3 3045.2,896.8 3064.2,898.2 3083.3,899.5 3102.4,900.7 3121.5,901.8 3140.5,902.7 3159.6,903.6" fill="none" stroke="#6aa84f" stroke-width="5.2" stroke-linejoin="round"/><line x1="2558.3" y1="493.4" x2="2558.3" y2="927" stroke="#000" stroke-width="2.8"/><line x1="2557" y1="925.6" x2="3188.7" y2="925.6" stroke="#000" stroke-width="2.8"/><line x1="2538.2" y1="921.0" x2="2558.3" y2="921.0" stroke="#000" stroke-width="1.8"/><text x="2532.9" y="929.0" font-family="Liberation Sans" font-size="24.9" fill="#444" text-anchor="end">0</text><line x1="2538.2" y1="818.0" x2="2558.3" y2="818.0" stroke="#000" stroke-width="1.8"/><text x="2532.9" y="826.0" font-family="Liberation Sans" font-size="24.9" fill="#444" text-anchor="end">200</text><line x1="2538.2" y1="715.0" x2="2558.3" y2="715.0" stroke="#000" stroke-width="1.8"/><text x="2532.9" y="723.0" font-family="Liberation Sans" font-size="24.9" fill="#444" text-anchor="end">400</text><line x1="2538.2" y1="612.0" x2="2558.3" y2="612.0" stroke="#000" stroke-width="1.8"/><text x="2532.9" y="620.0" font-family="Liberation Sans" font-size="24.9" fill="#444" text-anchor="end">600</text><line x1="2538.2" y1="509.0" x2="2558.3" y2="509.0" stroke="#000" stroke-width="1.8"/><text x="2532.9" y="517.0" font-family="Liberation Sans" font-size="24.9" fill="#444" text-anchor="end">800</text><line x1="2587.3" y1="925" x2="2587.3" y2="946.5" stroke="#000" stroke-width="1.8"/><text x="2587.3" y="973.3" font-family="Liberation Sans" font-size="24.9" fill="#444" text-anchor="middle">0.2</text><line x1="2730.4" y1="925" x2="2730.4" y2="946.5" stroke="#000" stroke-width="1.8"/><text x="2730.4" y="973.3" font-family="Liberation Sans" font-size="24.9" fill="#444" text-anchor="middle">0.4</text><line x1="2873.5" y1="925" x2="2873.5" y2="946.5" stroke="#000" stroke-width="1.8"/><text x="2873.5" y="973.3" font-family="Liberation Sans" font-size="24.9" fill="#444" text-anchor="middle">0.6</text><line x1="3016.5" y1="925" x2="3016.5" y2="946.5" stroke="#000" stroke-width="1.8"/><text x="3016.5" y="973.3" font-family="Liberation Sans" font-size="24.9" fill="#444" text-anchor="middle">0.8</text><line x1="3159.6" y1="925" x2="3159.6" y2="946.5" stroke="#000" stroke-width="1.8"/><text x="3159.6" y="973.3" font-family="Liberation Sans" font-size="24.9" fill="#444" text-anchor="middle">1.0</text><text x="2874.5" y="449.9" font-family="Liberation Sans" font-size="34.4" fill="#000" text-anchor="middle">Sample Size</text><text x="2873.8" y="478.6" font-family="Liberation Sans" font-size="25.7" fill="#000" text-anchor="middle">Standard Deviation = 1, H0: mean difference = 0</text><text x="2874" y="1019.3" font-family="Liberation Sans" font-size="29.8" font-weight="bold" fill="#000" text-anchor="middle">Alternative</text><text transform="translate(2482.4,708.7) rotate(-90)" font-family="Liberation Sans" font-size="29.8" font-weight="bold" fill="#000" text-anchor="middle">Sample Size</text><rect x="2560.6" y="1028.5" width="468.8" height="178.5" fill="#fff" stroke="#000" stroke-width="3"/><line x1="2568.9" y1="1058.5" x2="2629.1" y2="1058.5" stroke="#d1452d" stroke-width="4.6"/><text x="2640.4" y="1067.5" font-family="Liberation Sans" font-size="28.9" fill="#000"># subjects fixed</text><line x1="2568.9" y1="1117" x2="2629.1" y2="1117" stroke="#4c7dbf" stroke-width="4.6"/><text x="2640.4" y="1126.0" font-family="Liberation Sans" font-size="28.13" fill="#000">Expected # subjects under H1</text><line x1="2568.9" y1="1175.2" x2="2629.1" y2="1175.2" stroke="#6aa84f" stroke-width="4.6"/><text x="2640.4" y="1184.2" font-family="Liberation Sans" font-size="28.46" fill="#000">Max # subjects</text></svg>
</div>
<svg class="b" style="left:0;top:0;z-index:20" width="3323" height="1647" viewBox="0 0 3323 1647"><polygon points="2816.8,194.4 2844,168.5 2948.8,237.1 2961.5,225.5 3030,297.8 2917.7,267.8 2932,253.6" fill="#ff0000" stroke="#222" stroke-width="0.8" stroke-linejoin="miter"/>
<circle cx="3232.4" cy="179.3" r="49.3" fill="none" stroke="#ff0000" stroke-width="10.4"/>
<circle cx="3085.2" cy="329" r="49.2" fill="none" stroke="#ff0000" stroke-width="10"/></svg>
</body></html>
